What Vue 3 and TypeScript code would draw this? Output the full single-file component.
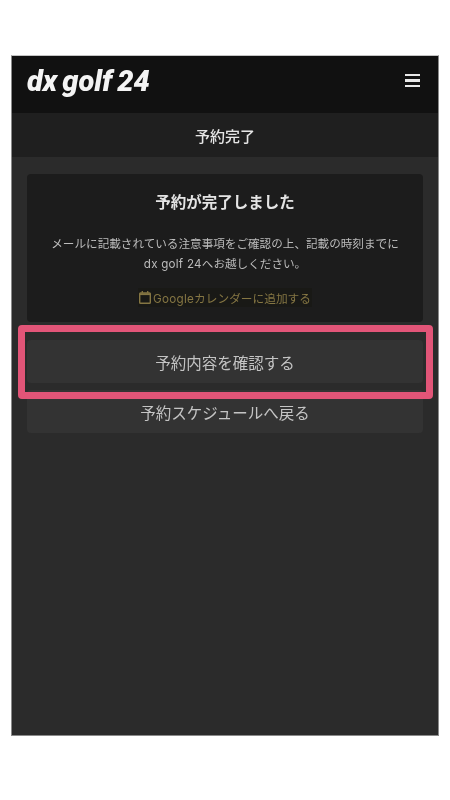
<template>
  <div class="page">
    <div class="phone">
      <header class="top-bar">
        <span class="logo">dx golf 24</span>
        <button class="menu-btn" aria-label="menu">
          <span v-for="n in 3" :key="n" class="menu-line"></span>
        </button>
      </header>

      <div class="title-bar">予約完了</div>

      <main class="content">
        <section class="card">
          <h2 class="card-title">予約が完了しました</h2>
          <p class="card-text">
            メールに記載されている注意事項をご確認の上、記載の時刻までに<br /><span class="latin">dx golf 24</span>へお越しください。
          </p>
          <a class="calendar-link" href="#">
            <svg class="calendar-icon" viewBox="0 0 12 13" width="12" height="13" fill="none">
              <rect x="0.7" y="2" width="10.6" height="10.3" rx="0.8" stroke="currentColor" stroke-width="1.4" />
              <path d="M0.7 3.2h10.6" stroke="currentColor" stroke-width="1.8" />
              <path d="M3.3 0v2M8.7 0v2" stroke="currentColor" stroke-width="1.3" />
            </svg>
            <span><span class="latin">Google</span>カレンダーに追加する</span>
          </a>
        </section>

        <div class="actions">
          <button v-for="action in actions" :key="action" class="action-btn">{{ action }}</button>
          <div class="highlight"></div>
        </div>
      </main>
    </div>
  </div>
</template>

<script setup lang="ts">
const actions: string[] = ['予約内容を確認する', '予約スケジュールへ戻る']
</script>

<style>
html,
body {
  background: #ffffff;
}
</style>

<style scoped>
.page {
  width: 450px;
  height: 800px;
  padding: 55px 11px 0 11px;
  box-sizing: border-box;
  background: #fff;
  font-family: "Liberation Sans", "Noto Sans CJK JP", sans-serif;
  overflow: hidden;
}

.phone {
  width: 428px;
  height: 681px;
  box-sizing: border-box;
  display: flex;
  flex-direction: column;
  background: #2b2b2b;
  border: 1px solid #8a8a8a;
  border-top-color: #c4c4c4;
  filter: blur(0.55px);
}

.top-bar {
  height: 57px;
  flex: none;
  display: flex;
  align-items: center;
  justify-content: space-between;
  padding: 0 18px 0 15px;
  background: #111111;
}

.logo {
  font-family: Roboto, sans-serif;
  font-size: 29px;
  font-weight: 900;
  font-style: italic;
  letter-spacing: -0.05px;
  word-spacing: -2px;
  color: #f4f4f4;
  position: relative;
  top: -4px;
}

.menu-btn {
  display: flex;
  flex-direction: column;
  gap: 3px;
  padding: 0;
  border: 0;
  background: none;
  position: relative;
  top: -4px;
}

.menu-line {
  display: block;
  width: 15px;
  height: 2.5px;
  background: #e8e8e8;
}

.title-bar {
  height: 44px;
  flex: none;
  display: flex;
  align-items: center;
  justify-content: center;
  background: #1f1f1f;
  color: #e6e6e6;
  font-size: 15px;
  font-weight: 500;
}

.content {
  padding: 17px 15px 0 15px;
  display: flex;
  flex-direction: column;
  gap: 18px;
}

.card {
  height: 148px;
  box-sizing: border-box;
  padding-top: 20px;
  background: #1c1c1c;
  border-radius: 4px;
  text-align: center;
}

.card-title {
  margin: 0;
  color: #e4e4e4;
  font-size: 15.5px;
  font-weight: 700;
  line-height: 18px;
}

.card-text {
  margin: 22px 0 0;
  color: #bcbcbc;
  font-size: 11.6px;
  line-height: 20px;
}

.latin {
  font-family: Inter, "Liberation Sans", sans-serif;
  letter-spacing: 0.25px;
}

.calendar-link {
  display: inline-flex;
  align-items: center;
  gap: 2px;
  margin-top: 14px;
  height: 19px;
  padding: 0 1px;
  background: #191916;
  color: #857643;
  font-size: 11.7px;
  text-decoration: none;
}

.calendar-icon {
  flex: none;
}

.actions {
  position: relative;
  display: flex;
  flex-direction: column;
  gap: 7px;
}

.action-btn {
  height: 43px;
  border: 0;
  border-radius: 4px;
  background: #333333;
  color: #c4c4c4;
  font-family: inherit;
  font-size: 15.5px;
}

.highlight {
  position: absolute;
  left: -9px;
  right: -10px;
  top: -15px;
  height: 74px;
  box-sizing: border-box;
  border: 7px solid #e25578;
  border-radius: 4px;
  pointer-events: none;
}
</style>
